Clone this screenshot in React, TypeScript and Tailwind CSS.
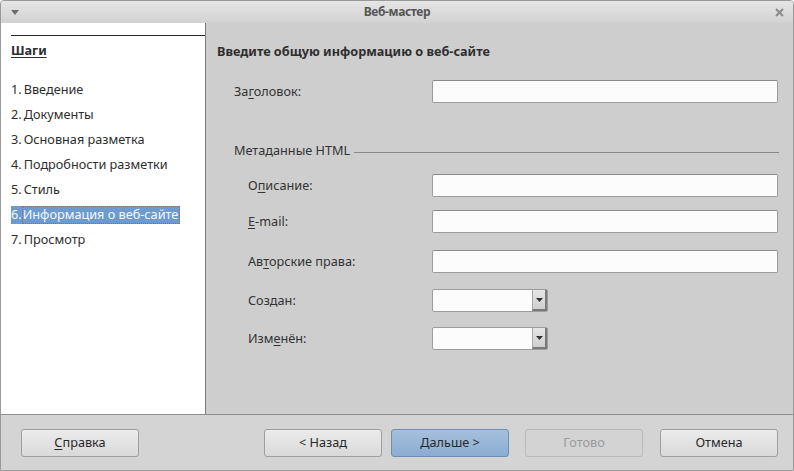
import React from 'react';

const steps: [string, string][] = [
  ['1.', 'Введение'],
  ['2.', 'Документы'],
  ['3.', 'Основная разметка'],
  ['4.', 'Подробности разметки'],
  ['5.', 'Стиль'],
  ['6.', 'Информация о веб-сайте'],
  ['7.', 'Просмотр'],
];

function Mn({ pre, u, post }: { pre: string; u: string; post: string }) {
  return (
    <span>
      {pre}
      <span className="underline underline-offset-2">{u}</span>
      {post}
    </span>
  );
}

function TextField() {
  return (
    <div className="flex-1 h-[23px] bg-[#fcfcfc] border border-[#9c9c9c] border-t-[#8a8a8a] rounded-[2px]" />
  );
}

function Combo() {
  return (
    <div className="w-[116px] h-[23px] flex bg-[#fcfcfc] border border-[#9c9c9c] rounded-[2px]">
      <div className="flex-1" />
      <div className="w-[15px] h-full flex items-center justify-center bg-gradient-to-b from-[#e6e6e6] to-[#cfcfcf] border-l border-[#a8a8a8] border-r-2 border-b-2 border-r-[#7a7a7a] border-b-[#7a7a7a]">
        <svg width="7" height="4" viewBox="0 0 7 4">
          <path d="M0 0h7L3.5 4z" fill="#333" />
        </svg>
      </div>
    </div>
  );
}

function Row({ label, children, mt }: { label: React.ReactNode; children: React.ReactNode; mt: string }) {
  return (
    <div className={`flex items-center h-[23px] pl-[42px] pr-[15px] ${mt}`}>
      <div className="w-[184px] text-[12.7px] text-[#333]">{label}</div>
      {children}
    </div>
  );
}

function Btn({ children, kind = 'normal', cls = '' }: { children: React.ReactNode; kind?: 'normal' | 'primary' | 'disabled'; cls?: string }) {
  const base = 'w-[118px] h-[28px] rounded-[3px] border text-[12.7px] flex items-center justify-center';
  const look =
    kind === 'primary'
      ? 'bg-gradient-to-b from-[#a6c0dc] to-[#8badd2] border-[#6f8fb5] text-[#2a2a2a]'
      : kind === 'disabled'
      ? 'bg-[#d3d3d3] border-[#b9b9b9] text-[#9a9a9a]'
      : 'bg-gradient-to-b from-[#ececec] to-[#d9d9d9] border-[#9f9f9f] text-[#2a2a2a]';
  return <div className={`${base} ${look} ${cls}`}>{children}</div>;
}

export default function App() {
  return (
    <div
      className="w-[794px] h-[471px] flex flex-col border border-[#9a9a9a] rounded-t-[4px] overflow-hidden bg-[#d5d5d5] text-[#2e2e2e]"
      style={{ fontFamily: '"Noto Sans", "Open Sans", sans-serif' }}
    >
      {/* title bar */}
      <div className="h-[22px] flex items-center px-[10px] bg-gradient-to-b from-[#e6e6e6] to-[#d2d2d2]">
        <svg width="8" height="5" viewBox="0 0 8 5">
          <path d="M0 0h8L4 5z" fill="#6e6e6e" />
        </svg>
        <div className="flex-1 text-center text-[12px] font-bold text-[#555] tracking-[-0.4px]">Веб-мастер</div>
        <svg width="9" height="9" viewBox="0 0 9 9" className="mr-[-1px]">
          <path d="M1 1l7 7M8 1l-7 7" stroke="#8a8a8a" strokeWidth="2" />
        </svg>
      </div>

      {/* body */}
      <div className="h-[391px] flex">
        <div className="w-[205px] bg-white border-r border-[#7c7c7c] pl-[10px] pt-[12px]">
          <div className="border-t border-[#2a2a2a]" />
          <div className="mt-[5px] h-[18px] leading-[18px] text-[12.7px] font-bold underline underline-offset-2">Шаги</div>
          <div className="mt-[18px]">
            {steps.map(([n, s], i) => (
              <div key={s} className="h-[25px] flex items-center text-[12.7px]">
                {i === 5 ? (
                  <div className="h-[18px] flex items-center bg-[#6e9bcf] text-[#f4f6fa]">
                    <span>{n}</span>
                    <span className="h-full flex items-center border border-dotted border-[#a46a3c] pr-[1px]">
                      {s}
                    </span>
                  </div>
                ) : (
                  <span>
                    {n}
                    <span className="ml-[2px]">{s}</span>
                  </span>
                )}
              </div>
            ))}
          </div>
        </div>

        <div className="flex-1 bg-[#cecece] pt-[19px]">
          <div className="pl-[11px] h-[18px] leading-[18px] text-[12.7px] font-bold">
            Введите общую информацию о веб-сайте
          </div>
          <div className="flex items-center h-[23px] pl-[28px] pr-[15px] mt-[20px]">
            <div className="w-[198px] text-[12.7px] text-[#333]">
              <Mn pre="За" u="г" post="оловок:" />
            </div>
            <TextField />
          </div>

          <div className="mt-[39px] h-[18px] flex items-center pl-[28px] pr-[14px]">
            <span className="text-[12.7px] text-[#333]">Метаданные HTML</span>
            <div className="flex-1 ml-[4px] mt-[2px] border-t border-[#8a8a8a]" />
          </div>

          <Row mt="mt-[14px]" label={<Mn pre="О" u="п" post="исание:" />}>
            <TextField />
          </Row>
          <Row mt="mt-[13px]" label={<Mn pre="" u="E" post="-mail:" />}>
            <TextField />
          </Row>
          <Row mt="mt-[17px]" label={<Mn pre="Ав" u="т" post="орские права:" />}>
            <TextField />
          </Row>
          <Row mt="mt-[16px]" label="Создан:">
            <Combo />
          </Row>
          <Row mt="mt-[15px]" label={<Mn pre="Изм" u="е" post="нён:" />}>
            <Combo />
          </Row>
        </div>
      </div>

      {/* footer */}
      <div className="flex-1 border-t border-[#8c8c8c] bg-[#d4d4d4] flex items-center pl-[20px]">
        <Btn>
          <Mn pre="" u="С" post="правка" />
        </Btn>
        <Btn cls="ml-[125px]">&lt; Назад</Btn>
        <Btn kind="primary" cls="ml-[9px]">Дальше &gt;</Btn>
        <Btn kind="disabled" cls="ml-[16px]">Готово</Btn>
        <Btn cls="ml-[17px]">Отмена</Btn>
      </div>
    </div>
  );
}
